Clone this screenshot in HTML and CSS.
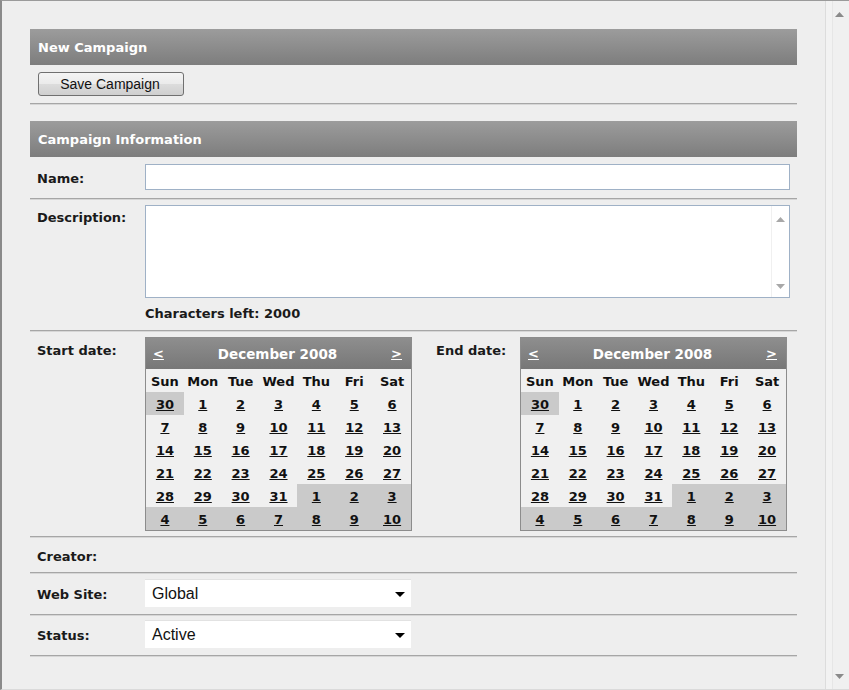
FILE: index.html
```html
<!DOCTYPE html>
<html>
<head>
<meta charset="utf-8">
<title>New Campaign</title>
<link rel="stylesheet" href="styles.css">
</head>
<body>
<div class="window">
  <div class="viewport">
    <div class="form">
      <div class="bar">New Campaign</div>
      <div class="toolbar"><button class="btn" type="button">Save Campaign</button></div>
      <div class="bar">Campaign Information</div>

      <div class="row row-name">
        <div class="label label-mid">Name:</div>
        <div class="field"><div class="text-input"></div></div>
      </div>

      <div class="row row-desc">
        <div class="label label-desc">Description:</div>
        <div class="field">
          <div class="textarea">
            <div class="textarea-body"></div>
            <div class="mini-scroll">
              <svg width="9" height="5" viewBox="0 0 9 5"><path d="M0 5 L4.5 0 L9 5 Z" fill="#a8a8a8"/></svg>
              <svg width="9" height="5" viewBox="0 0 9 5"><path d="M0 0 L9 0 L4.5 5 Z" fill="#a8a8a8"/></svg>
            </div>
          </div>
          <div class="chars-left">Characters left: 2000</div>
        </div>
      </div>

      <div class="row row-dates">
        <div class="label label-date">Start date:</div>
        <div class="field dates">
          <div class="calendar">
            <div class="cal-head"><span class="nav">&lt;</span><span class="cal-title">December 2008</span><span class="nav">&gt;</span></div>
            <div class="cal-grid">
              <div class="dn">Sun</div><div class="dn">Mon</div><div class="dn">Tue</div><div class="dn">Wed</div><div class="dn">Thu</div><div class="dn">Fri</div><div class="dn">Sat</div>
              <div class="d o"><u>30</u></div><div class="d"><u>1</u></div><div class="d"><u>2</u></div><div class="d"><u>3</u></div><div class="d"><u>4</u></div><div class="d"><u>5</u></div><div class="d"><u>6</u></div>
              <div class="d"><u>7</u></div><div class="d"><u>8</u></div><div class="d"><u>9</u></div><div class="d"><u>10</u></div><div class="d"><u>11</u></div><div class="d"><u>12</u></div><div class="d"><u>13</u></div>
              <div class="d"><u>14</u></div><div class="d"><u>15</u></div><div class="d"><u>16</u></div><div class="d"><u>17</u></div><div class="d"><u>18</u></div><div class="d"><u>19</u></div><div class="d"><u>20</u></div>
              <div class="d"><u>21</u></div><div class="d"><u>22</u></div><div class="d"><u>23</u></div><div class="d"><u>24</u></div><div class="d"><u>25</u></div><div class="d"><u>26</u></div><div class="d"><u>27</u></div>
              <div class="d"><u>28</u></div><div class="d"><u>29</u></div><div class="d"><u>30</u></div><div class="d"><u>31</u></div><div class="d o"><u>1</u></div><div class="d o"><u>2</u></div><div class="d o"><u>3</u></div>
              <div class="d o"><u>4</u></div><div class="d o"><u>5</u></div><div class="d o"><u>6</u></div><div class="d o"><u>7</u></div><div class="d o"><u>8</u></div><div class="d o"><u>9</u></div><div class="d o"><u>10</u></div>
            </div>
          </div>
          <div class="label end-label">End date:</div>
          <div class="calendar">
            <div class="cal-head"><span class="nav">&lt;</span><span class="cal-title">December 2008</span><span class="nav">&gt;</span></div>
            <div class="cal-grid">
              <div class="dn">Sun</div><div class="dn">Mon</div><div class="dn">Tue</div><div class="dn">Wed</div><div class="dn">Thu</div><div class="dn">Fri</div><div class="dn">Sat</div>
              <div class="d o"><u>30</u></div><div class="d"><u>1</u></div><div class="d"><u>2</u></div><div class="d"><u>3</u></div><div class="d"><u>4</u></div><div class="d"><u>5</u></div><div class="d"><u>6</u></div>
              <div class="d"><u>7</u></div><div class="d"><u>8</u></div><div class="d"><u>9</u></div><div class="d"><u>10</u></div><div class="d"><u>11</u></div><div class="d"><u>12</u></div><div class="d"><u>13</u></div>
              <div class="d"><u>14</u></div><div class="d"><u>15</u></div><div class="d"><u>16</u></div><div class="d"><u>17</u></div><div class="d"><u>18</u></div><div class="d"><u>19</u></div><div class="d"><u>20</u></div>
              <div class="d"><u>21</u></div><div class="d"><u>22</u></div><div class="d"><u>23</u></div><div class="d"><u>24</u></div><div class="d"><u>25</u></div><div class="d"><u>26</u></div><div class="d"><u>27</u></div>
              <div class="d"><u>28</u></div><div class="d"><u>29</u></div><div class="d"><u>30</u></div><div class="d"><u>31</u></div><div class="d o"><u>1</u></div><div class="d o"><u>2</u></div><div class="d o"><u>3</u></div>
              <div class="d o"><u>4</u></div><div class="d o"><u>5</u></div><div class="d o"><u>6</u></div><div class="d o"><u>7</u></div><div class="d o"><u>8</u></div><div class="d o"><u>9</u></div><div class="d o"><u>10</u></div>
            </div>
          </div>
        </div>
      </div>

      <div class="row row-creator">
        <div class="label label-mid">Creator:</div>
        <div class="field"></div>
      </div>

      <div class="row row-site">
        <div class="label label-mid">Web Site:</div>
        <div class="field">
          <div class="select"><span>Global</span><svg width="10" height="5" viewBox="0 0 10 5"><path d="M0 0 L10 0 L5 5 Z" fill="#000"/></svg></div>
        </div>
      </div>

      <div class="row row-status">
        <div class="label label-mid">Status:</div>
        <div class="field">
          <div class="select"><span>Active</span><svg width="10" height="5" viewBox="0 0 10 5"><path d="M0 0 L10 0 L5 5 Z" fill="#000"/></svg></div>
        </div>
      </div>
    </div>
  </div>
  <div class="scrollbar">
    <svg width="9" height="5" viewBox="0 0 9 5"><path d="M0 5 L4.5 0 L9 5 Z" fill="#8a8a8a"/></svg>
    <svg width="9" height="5" viewBox="0 0 9 5"><path d="M0 0 L9 0 L4.5 5 Z" fill="#8a8a8a"/></svg>
  </div>
</div>
</body>
</html>
```
FILE: styles.css
```css
html, body {
  margin: 0;
  padding: 0;
  background: #eeeeee;
}

.window {
  width: 849px;
  height: 690px;
  box-sizing: border-box;
  border-left: 2px solid #8a8a8a;
  border-top: 1px solid #9a9a9a;
  border-bottom: 1px solid #dadada;
  display: flex;
  background: #eeeeee;
  font-family: "DejaVu Sans", Verdana, sans-serif;
  color: #1a1a1a;
  overflow: hidden;
}

.viewport {
  flex: 1;
  padding: 28px 28px 0 28px;
}

.form {
  width: 767px;
}

.bar {
  height: 36px;
  box-sizing: border-box;
  line-height: 34px;
  padding: 2px 0 0 8px;
  background: linear-gradient(#9c9c9c, #7d7d7d);
  color: #ffffff;
  font-weight: bold;
  font-size: 13px;
}

.toolbar {
  padding: 7px 8px;
  border-bottom: 1px solid #a6a6a6;
  box-shadow: 0 1px 0 #d6d6d6;
  margin-bottom: 17px;
  display: flex;
}

.btn {
  width: 146px;
  height: 24px;
  border: 1px solid #707070;
  border-radius: 3px;
  background: linear-gradient(#f4f4f4 0%, #ebebeb 48%, #dcdcdc 52%, #cfcfcf 100%);
  font-family: "Liberation Sans", Arial, sans-serif;
  font-size: 14px;
  color: #111;
  padding: 0 2px 0 0;
  margin: 0;
}

.row {
  display: flex;
  border-bottom: 1px solid #a6a6a6;
  box-shadow: 0 1px 0 #d6d6d6;
  margin-bottom: 1px;
}

.label {
  width: 108px;
  padding-left: 7px;
  font-size: 13px;
  font-weight: bold;
  line-height: 16px;
  flex: none;
}

.label-mid {
  align-self: center;
  margin-top: 4px;
}

.field {
  flex: 1;
}

.row-name {
  padding: 7px 0 8px;
}

.text-input {
  width: 645px;
  height: 26px;
  box-sizing: border-box;
  background: #ffffff;
  border: 1px solid #9fb1c6;
}

.row-desc {
  padding: 5px 0 8px;
}

.label-desc {
  padding-top: 5px;
}

.textarea {
  width: 645px;
  height: 93px;
  box-sizing: border-box;
  background: #ffffff;
  border: 1px solid #9fb1c6;
  display: flex;
}

.textarea-body {
  flex: 1;
}

.mini-scroll {
  width: 17px;
  border-left: 1px solid #f0f0f0;
  display: flex;
  flex-direction: column;
  justify-content: space-between;
  align-items: center;
  padding: 11px 0 8px;
}

.chars-left {
  margin-top: 8px;
  font-size: 13px;
  font-weight: bold;
  line-height: 16px;
}

.row-dates {
  padding: 5px 0 5px;
}

.label-date {
  padding-top: 6px;
}

.dates {
  display: flex;
  align-items: flex-start;
}

.end-label {
  width: 84px;
  padding-left: 24px;
  padding-top: 6px;
}

.calendar {
  width: 267px;
  box-sizing: border-box;
  border: 1px solid #8c8c8c;
  background: #f0f0f0;
}

.cal-head {
  height: 31px;
  box-sizing: border-box;
  padding: 0 9px 0 7px;
  background: linear-gradient(#8e8e8e, #777777);
  color: #ffffff;
  font-size: 13px;
  font-weight: bold;
  display: flex;
  align-items: center;
  justify-content: space-between;
}

.cal-title {
  font-size: 13.5px;
}

.nav {
  text-decoration: underline;
}

.cal-grid {
  display: grid;
  grid-template-columns: repeat(7, 1fr);
  grid-auto-rows: 23px;
  font-size: 13px;
  font-weight: bold;
  color: #111;
}

.dn,
.d {
  display: flex;
  align-items: center;
  justify-content: center;
  padding-top: 2px;
  box-sizing: border-box;
}

.d.o {
  background: #cacaca;
}

.row-creator {
  height: 34px;
}

.row-site {
  padding: 5px 0 7px;
}

.row-status {
  padding: 4px 0 7px;
}

.select {
  width: 266px;
  height: 28px;
  box-sizing: border-box;
  background: #ffffff;
  border-top: 1px solid #e2e2e2;
  display: flex;
  align-items: center;
  justify-content: space-between;
  padding: 1px 6px 0 7px;
  font-family: "Liberation Sans", Arial, sans-serif;
  font-size: 16px;
  color: #111;
}

.scrollbar {
  width: 24px;
  flex: none;
  box-sizing: border-box;
  border-left: 1px solid #dcdcdc;
  background: linear-gradient(to right, #f2f2f2 0, #f2f2f2 6px, #e6e6e6 6px, #e6e6e6 7px, #f0f0f0 7px);
  display: flex;
  flex-direction: column;
  justify-content: space-between;
  align-items: center;
  padding: 11px 0 10px 4px;
}
```
